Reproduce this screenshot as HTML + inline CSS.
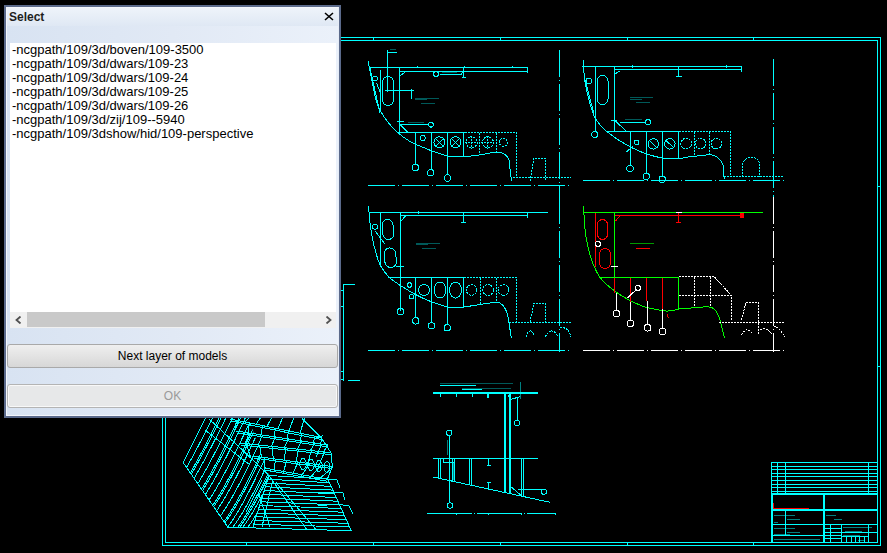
<!DOCTYPE html>
<html><head><meta charset="utf-8">
<style>
*{margin:0;padding:0;box-sizing:border-box}
html,body{width:887px;height:553px;overflow:hidden;background:#000;font-family:"Liberation Sans",sans-serif}
#cad{position:absolute;left:0;top:0}
#dlg{position:absolute;left:4px;top:5px;width:337px;height:413px;background:#5b6a8b;}
#dlg .in{position:absolute;left:2px;top:2px;width:333px;height:409px;border:1px solid #f4f6fb;border-right-color:#e6ecf6;
 background:linear-gradient(90deg,#d8e3f2 0%,#e1e9f5 50%,#ebf1fa 100%);}
#dlg .tb{position:absolute;left:0;top:0;width:331px;height:18px;background:linear-gradient(180deg,#eef3fa 0%,#dfe8f4 100%)}
#dlg .title{position:absolute;left:2px;top:2px;font-size:12px;font-weight:bold;color:#1e1e1e}
#dlg .x{position:absolute;left:317px;top:4px;}
#list{position:absolute;left:3px;top:35px;width:326px;height:285px;background:#fff}
#list .items{position:absolute;left:2px;top:0px;font-size:13px;line-height:14px;color:#000;white-space:pre}
#sb{position:absolute;left:0;top:269px;width:326px;height:16px;background:#f0f0f0}
#thumb{position:absolute;left:17px;top:0;width:238px;height:15px;background:#c9c9c9}
.btn{position:absolute;left:0px;width:331px;height:24px;border:1px solid #a9a9a9;border-radius:3px;text-align:center;font-size:12px;line-height:22px}
#b1{top:336px;background:linear-gradient(180deg,#efefef 0%,#e3e3e3 50%,#d7d7d7 100%);color:#000}
#b2{top:376px;background:#e7e8e9;border-color:#b4b4b4;color:#9a9a9a;box-shadow:inset 0 0 0 1px #f8f8f8}
</style></head><body>
<svg id="cad" width="887" height="553" viewBox="0 0 887 553">
<g fill="none" stroke="#00ffff" stroke-width="1" shape-rendering="crispEdges">
<rect x="162.5" y="37.5" width="718" height="508"/>
<rect x="165.5" y="40.5" width="712" height="502"/>
<path d="M246.5 37V41M373.5 37V41M500.5 37V41M627.5 37V41M753.5 37V41M246.5 542V546M373.5 542V546M500.5 542V546M627.5 542V546M753.5 542V546M877 186.5H881M877 366.5H881"/>
<path d="M369 67.5H527.5M400 71.5H527.5M527.5 67V73M417.5 66V68M464.5 66V68M512.5 66V68M368 61L375.6 99C380 115 395 135 416 144.5L432 151L447 156L463 157L479 155L496 152Q506 152 509 160L511.5 181M370 68L380 113M399.5 68V135M380.5 70V112M387.5 50V92M387 52.5H397M385 90.5H413.5M411.5 89V99M440 74.5H461L463 71M463.5 67V77.5M462 77.5H465.5M400 76L406.5 71M400 124.5H428.5M397 121.5H403.5M400 124.5L408 132.5M397 132.5H464.5M415.5 132.5V165M431.5 132.5V170M447.5 132.5V175M463.5 132.5V157M376.5 83L381 94"/>
<circle cx="375" cy="78.5" r="2.5" /><circle cx="436" cy="74" r="2.4" /><circle cx="431" cy="124.7" r="2.4" />
<rect x="382.5" y="76.5" width="11" height="29" rx="5.5"/>
<circle cx="422.8" cy="138" r="2.5" /><circle cx="439.4" cy="142.3" r="5.5" /><circle cx="455.5" cy="142.3" r="5.5" />
<path d="M436 139L443 146M443 139L436 146M452 139L459 146M459 139L452 146"/>
<g stroke-dasharray="2 1"><circle cx="471.7" cy="142.3" r="5.5" /><circle cx="487.8" cy="142.3" r="5.5" /><circle cx="503.4" cy="142.3" r="4" /><path d="M464.5 132.5H516.5V178M479.5 132.5V155M496.5 132.5V152M471.7 136V149M487.8 136V149M465 142.3H478M481 142.3H494"/><path d="M530 181L534 158.5H545.5V181M512.5 177.5H571"/></g>
<circle cx="415.4" cy="167.5" r="3.2" /><circle cx="430.6" cy="172.8" r="3.2" /><circle cx="447.5" cy="178" r="3.2" />
<path stroke-dasharray="27 3 1 3" d="M368 185.5H571"/>
<path stroke-dasharray="27 3 1 3" d="M559.5 50V197"/>
<path stroke-opacity="0.35" d="M390 49.5H396M415 98H438.5M415 99.5H427M421 103H434.5M442 72.5H457M408 122.8H423.5"/>
<path d="M582 66.5H741.5M614 69.5H741.5M741.5 66V72M583.5 60V68M632.5 65V68M726.5 65V68M583.5 66C584 84 588 100 594.5 117Q600 126 606 131C620 142 640 154 662 158L678 159L688 157L709.8 154.6Q719 155 723 165L724.2 179.5M585 79.6L594 114M595.5 66.5V131.5M614.5 66.5V131.5M615 74L619.5 71M678.5 67V76M675.5 76.5H681.5M611 120.5H616.5M615 120.5L626 131M620 122.5H645M605.5 131.5H678.5M630.5 131.5V165.5M646.5 131.5V173.5M662.5 131.5V176.5M678 131.5V159M633 146L626.5 152"/>
<rect x="597" y="75.5" width="11" height="29" rx="5.5"/>
<circle cx="588.9" cy="80.8" r="2.8" /><circle cx="594.6" cy="134.5" r="3" /><circle cx="648" cy="122.3" r="2.6" /><circle cx="636.6" cy="142.4" r="2.3" />
<circle cx="653.3" cy="143.9" r="5.2" /><circle cx="669.9" cy="143.9" r="5.2" />
<path d="M650 141L656 147M666.5 141L673 147"/>
<g stroke-dasharray="2 1"><circle cx="686.2" cy="143.6" r="5.3" /><circle cx="700.6" cy="143.6" r="5.3" /><circle cx="716.4" cy="143.6" r="5.3" /><path d="M678.5 131.5H730.5V177M694.5 131.5V155M709.5 131.5V154M724 176.5H784M742.5 177V165Q744 157.5 751 157.5Q759.5 157.5 759.5 165V177"/></g>
<circle cx="630" cy="168.5" r="3.2" /><circle cx="646.3" cy="176.4" r="3.2" /><circle cx="662.2" cy="179.3" r="3.2" />
<path stroke-dasharray="27 3 1 3" d="M583 180.5H784M773.5 59V197"/>
<path stroke-opacity="0.35" d="M630 97H653M630 99H642M636 102H650M625 119.8H642"/>
<path d="M369 212.5H548M401 215.5H527.5M527.5 212V218M418.5 211V213.5M463.5 212.5V222.5M461 222.5H466M368.5 206.4C370 230 374 250 380 265Q384 272 389.7 278C400 286 418 297 432 302L447 307L464 307L479 304.7L496 302Q504 302 507.6 314.7L511.4 338M380.5 212.5V265M400.5 212.5V311M401 221L406 215.5M396 266.5H403.5M375 230.8L384.8 243.8M388 277.5H464M415.5 277.5V318M431.5 277.5V323M447.5 277.5V325M463.5 277.5V307M343.5 284V381M343.5 284.5H355M341 290.5H343.5M341 306.5H343.5M341 371.5H343.5M341 379.5H343.5M348 380.5H360"/>
<rect x="382.5" y="219.5" width="11" height="20" rx="5.5" transform="rotate(-6 388 229.5)"/>
<rect x="384.5" y="248" width="11.5" height="19.5" rx="5.7" transform="rotate(-6 390 257.7)"/>
<circle cx="375" cy="226.7" r="2.5" /><circle cx="409.6" cy="285" r="2.2" /><circle cx="411.6" cy="296.8" r="2.2" />
<circle cx="424" cy="290" r="5.5" /><ellipse cx="440" cy="290" rx="6" ry="8"/><ellipse cx="455.5" cy="290" rx="6" ry="8"/>
<g stroke-dasharray="2 1"><circle cx="471.7" cy="290" r="5.3" /><circle cx="488" cy="290" r="5.3" /><circle cx="503.4" cy="290" r="5.3" /><path d="M464 277.5H516.5V322M480.5 277.5V304M496.5 277.5V302M509 322.5H571M530 322L534 303.5H545.5V322M526 337Q530 325 535 337M545 337Q552 325 558 337M560 328Q568 326 571 337"/></g>
<circle cx="400.5" cy="311.7" r="3.2" /><circle cx="415.8" cy="320.9" r="3.2" /><circle cx="431.5" cy="325.8" r="3.2" /><circle cx="447.3" cy="327.8" r="3.2" />
<path stroke-dasharray="27 3 1 3" d="M368 350.5H571M559.5 197V352"/>
<path stroke-opacity="0.35" d="M415.7 243H440M415.7 244.5H428M422 248H436"/>
<g stroke="#00ff00"><path d="M583.5 212.5H763M583.7 206.5C584 240 590 262 600 277.5C610 290 630 302 646 307.4L662.6 310.7Q671 312 679 309L705.8 306.8Q713 306.5 716 311L719.2 317.2L724.6 338M614.5 212.5V277.5M599 277.5H678.5M678.5 277.5V309"/></g>
<g stroke="#ff0000"><path d="M614.5 215.5H741.5M615.4 221.2L620.3 215.5M595.5 213V266.7M678.5 213V223M676 222.8H681M614.5 278V293M630.5 278V301.7M646.5 278V301M662.5 278V309M635.8 248.3H650.4M667 314L668.5 318"/><rect x="597.5" y="219.5" width="10" height="20" rx="5" ry="5"/><rect x="599.5" y="248.5" width="11" height="20" rx="5.5" ry="5.5"/><rect x="740.5" y="213.5" width="2.5" height="4" fill="#ff0000"/></g>
<path stroke="#00ff00" d="M630 243H653.7" stroke-opacity="0.6"/>
<g stroke="#ffffff"><path d="M616.5 292.8V310.3M630.5 301.7V320M647.5 301V324.5M662.5 309V328.2M627.6 297.7L635.9 290M611.4 266.5H617.9M675.6 212.5H682"/><circle cx="597.9" cy="243.9" r="2.5" /><circle cx="616.3" cy="313.6" r="3.3" /><circle cx="630.4" cy="323.4" r="3.3" /><circle cx="647.6" cy="327.8" r="3.3" /><circle cx="662.6" cy="331.5" r="3.3" /><circle cx="637.9" cy="287.9" r="2.5" /><g stroke-dasharray="2 1"><path d="M678.5 276.5H714L731 294.9V320M679 295.8H731M694.5 276.5V306.8M710.8 276.5V306.8M719.2 322.5H785M741.6 320L746 302.3H758V335M741.6 335Q746 326 752 333M760 330Q766 326 772 334M774 326Q780 328 785 337"/></g><path stroke-dasharray="27 3 1 3" d="M583 350.5H786M773.5 197V352"/></g>
<path d="M205.6 418L183.2 462.6L227.9 527.2L351.3 530.7"/>
<clipPath id="fanclip"><path d="M205.6 417L183.2 462.6L227.9 527.6L253 528L269 475.5L258 445L248 417Z"/></clipPath>
<g clip-path="url(#fanclip)"><path d="M184.9 470.4Q201.5 442.0 241.9 358.0M188.6 475.8Q205.7 447.4 245.6 363.4M190.4 475.8Q207.5 447.4 247.4 363.4M192.4 481.1Q209.9 452.8 249.4 368.8M196.1 486.5Q214.1 458.1 253.1 374.1M199.8 491.9Q218.4 463.5 256.8 379.5M201.6 491.9Q220.2 463.5 258.6 379.5M203.5 497.3Q222.6 468.9 260.5 384.9M207.3 502.7Q226.8 474.3 264.3 390.3M211.0 508.1Q231.0 479.7 268.0 395.7M212.8 508.1Q232.8 479.7 269.8 395.7M214.7 513.5Q235.3 485.1 271.7 401.1M218.4 518.8Q239.5 490.4 275.4 406.4M222.2 524.2Q243.7 495.8 279.2 411.8M224.0 524.2Q245.5 495.8 281.0 411.8M225.9 529.6Q247.9 501.2 282.9 417.2M230.9 529.9Q252.9 501.5 287.9 417.5M235.9 529.9Q257.9 501.5 292.9 417.5M237.7 529.9Q259.7 501.5 294.7 417.5M240.9 529.9Q262.9 501.5 297.9 417.5M245.9 529.9Q267.9 501.5 302.9 417.5M250.9 529.9Q272.9 501.5 307.9 417.5M252.7 529.9Q274.7 501.5 309.7 417.5M209 419L240.5 448.2L269 475.5M205 430L250 465"/></g>
<path d="M302 418.5L321 437.5L331 452.7L332.4 466.6L327.3 479.3M230 419L321 437.5M231 421L321 439.5M236 431L328 445M237 433L328 447M240 443L331 452.7M241 445L331 454.7M252.7 456L332.4 466.6M253.7 458L332.4 468.6M264 468L327.3 479.3M265 470L327.3 481.3M236.5 420.3L234.6 432.0M249.5 423.0L247.7 434.0M262.5 425.6L260.9 436.0M275.5 428.2L274.0 438.0M288.5 430.9L287.1 440.0M301.5 433.5L300.3 442.0M314.5 436.2L313.4 444.0M249.1 433.0L245.0 444.4M262.3 435.0L258.0 445.8M275.4 437.0L271.0 447.2M288.6 439.0L284.0 448.5M301.7 441.0L297.0 449.9M314.9 443.0L310.0 451.3M328.0 445.0L323.0 452.7M246.5 443.7L250.4 456.8M259.5 445.1L261.8 458.3M272.5 446.5L273.2 459.8M285.5 447.9L284.5 461.3M298.5 449.2L295.9 462.8M311.5 450.6L307.3 464.3M324.5 452.0L318.7 465.8M264.1 457.5L265.0 469.6M275.5 459.0L274.1 471.2M286.9 460.5L283.1 472.8M298.2 462.1L292.2 474.5M309.6 463.6L301.2 476.1M321.0 465.1L310.3 477.7M332.4 466.6L319.3 479.3M245 422.0L250 417M256 424.2L261 417M267 426.4L272 417M278 428.6L283 417M289 430.8L294 417M300 433.0L305 417"/>
<path d="M269 475.5L327.8 479L351.3 530.7M269 475.5L252.6 528M267.8 479.2L329.5 482.7M266.7 483.0L331.2 486.4M265.5 486.8L332.8 490.1M264.3 490.5L334.5 493.8M263.1 494.2L336.2 497.5M262.0 498.0L337.9 501.2M260.8 501.8L339.6 504.9M259.6 505.5L341.2 508.5M258.5 509.2L342.9 512.2M257.3 513.0L344.6 515.9M256.1 516.8L346.3 519.6M254.9 520.5L347.9 523.3M253.8 524.2L349.6 527.0M269 475.5L306.7 529.6M276 482.5L316 529.6M273 479L262 527M258 492L270 527M262 480L246 512M327.8 479L337 480L340 488M331 492L343 493L345 500M336 504L349 506L353 514M311 493L331 492M318 506L336 504M316 438L322 436L320 448L316 457"/>
<ellipse cx="303" cy="464" rx="3.2" ry="5.5"/><ellipse cx="311" cy="465" rx="3.2" ry="5.5"/><ellipse cx="319" cy="466" rx="3.2" ry="5.5"/><ellipse cx="327" cy="467" rx="3" ry="5.5"/>
<path d="M433 458.5H538M433 477L550 502.3M438.5 458.5V478M440.5 458.5V478M452.5 458.5V481M454.5 458.5V481M469.5 458.5V485M471.5 458.5V485M521.5 458.5V496.6M523.5 458.5V496.6M440.5 393.5V396.5M456.5 393.5V396.5M472.5 393.5V396.5M507.8 395.3L511.2 399.4L520 396.6M517.5 397.3V420.3M449.5 435.5V502.8M443.5 459V462.5H454M488.5 459V465M486.5 465H490.5M488.5 482V488.5M486.5 482H490.5M511 486.8L522.4 496.6M517.5 489.5H541"/>
<path stroke-dasharray="45 2 1 2" d="M426.8 513.5H556"/><path d="M456.5 513V515M488.5 513V515M521.5 513V515M555.5 513V515"/>
<path stroke-width="2" d="M433 393H538M505 394V493.3M510 394V493.3M488 394V398"/>
<path stroke-opacity="0.5" d="M520.5 382V399.4M447.5 440V455M453.5 462V480"/>
<circle cx="517" cy="423" r="2.7" /><circle cx="449.2" cy="432.8" r="2.7" /><circle cx="450" cy="505.5" r="2.7" /><circle cx="543.8" cy="491.7" r="2.7" />
<path stroke-opacity="0.35" d="M439.5 383.5H512.5M461.8 388H510.5"/><path d="M439.5 385.5H476M461.8 389.5H482"/>
<path d="M771.5 462.5H877M771.5 462V494M771.5 466.5H877M771.5 469.5H877M771.5 473.5H877M771.5 476.5H877M771.5 480.5H877M771.5 484H877M771.5 487.5H877M771.5 491.5H877M777.5 463V493M785.5 463V493M868.5 463V493M771.5 524.5H877M771.5 535.5H824M785.5 510V535.5M830.5 524.5V542M841.5 524.5V542M868.5 524.5V542M824 528.5H841.5M824 532H841.5M824 535.5H841.5M824 538.8H841.5M841.5 532.5H877M841.5 536.7H868.5M846.5 536.7V542M851.5 536.7V542M855.5 536.7V542M859.5 536.7V542M864.5 536.7V542"/>
<path stroke-width="2" d="M771 494H877M824 494V542M771 510H877M772 494V542"/>
<path stroke="#ff0000" d="M773.5 503V509M773 508.7H809"/>
<path stroke-opacity="0.5" d="M774 515H795M787 519H800M774 522H778M774 528H795M787 532H800M774 534H790M774 539H820M826 515H836M834 519H842M843 527H860M845 531H862M843 535H860M858 527H872M858 540H865"/>
</g>
</svg>
<div id="dlg"><div class="in">
 <div class="tb"></div>
 <div class="title">Select</div>
 <svg class="x" width="10" height="9" viewBox="0 0 10 9"><path d="M1 1L9 8M9 1L1 8" stroke="#000" stroke-width="1.6"/></svg>
 <div id="list"><div class="items">-ncgpath/109/3d/boven/109-3500
-ncgpath/109/3d/dwars/109-23
-ncgpath/109/3d/dwars/109-24
-ncgpath/109/3d/dwars/109-25
-ncgpath/109/3d/dwars/109-26
-ncgpath/109/3d/zij/109--5940
-ncgpath/109/3dshow/hid/109-perspective</div>
  <div id="sb"><div id="thumb"></div>
   <svg style="position:absolute;left:5px;top:4px" width="7" height="8"><path d="M5.5 0.5L1.5 4L5.5 7.5" fill="none" stroke="#505050" stroke-width="1.8"/></svg>
   <svg style="position:absolute;left:315px;top:4px" width="7" height="8"><path d="M1.5 0.5L5.5 4L1.5 7.5" fill="none" stroke="#505050" stroke-width="1.8"/></svg>
  </div>
 </div>
 <div class="btn" id="b1">Next layer of models</div>
 <div class="btn" id="b2">OK</div>
</div></div>
</body></html>
